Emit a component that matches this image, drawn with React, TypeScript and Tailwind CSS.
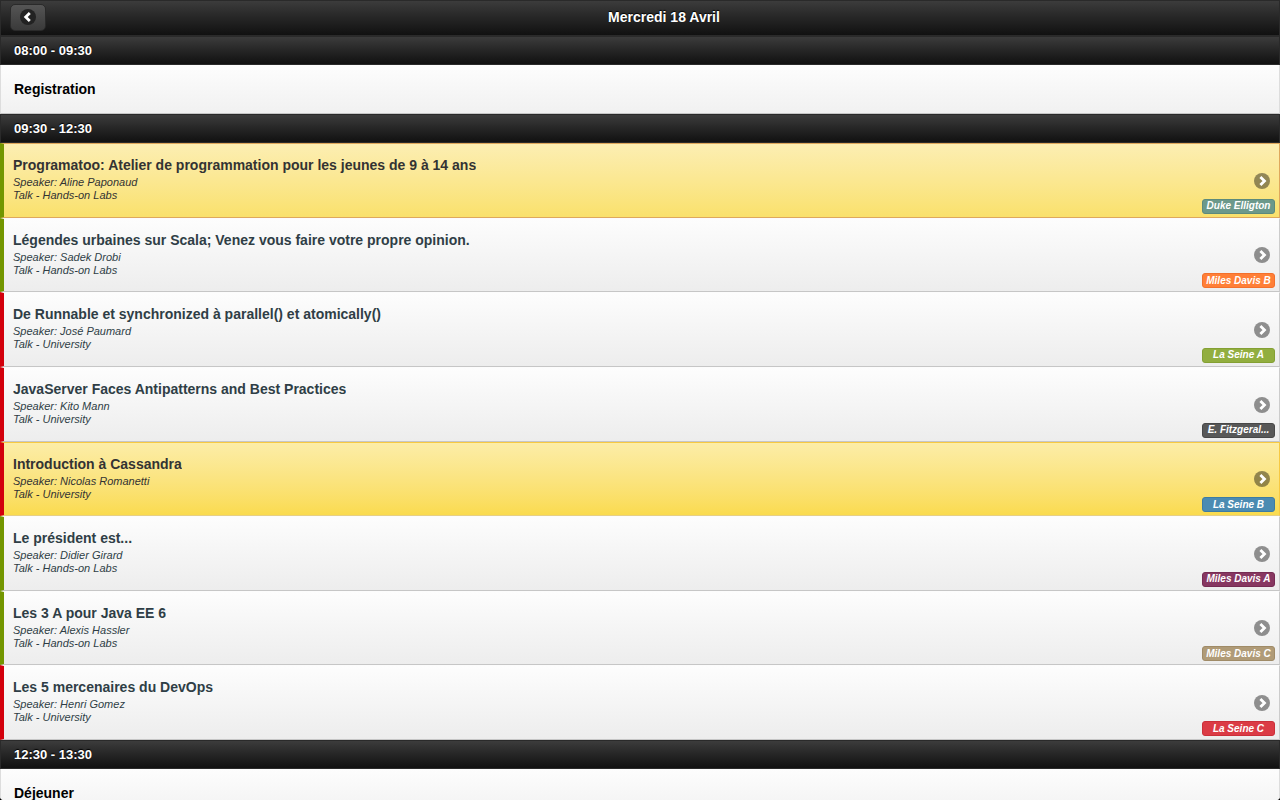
import React from "react";

type Talk = {
  title: string;
  speaker: string;
  kind: string;
  room: string;
  roomClass: string;
  edge: string;
  surface: string;
};

const GREEN = "border-l-[#739600]";
const RED = "border-l-[#d3000c]";
const PLAIN =
  "border-t-[#fcfcfc] border-b-[#c6c6c6] border-r-[#cccccc] bg-linear-to-b from-[#fdfdfd] to-[#ededed] text-[#2f3e46]";
const GOLD =
  "border-t-[#dfa85c] border-b-[#dfa85c] border-r-[#dfa85c] bg-linear-to-b from-[#fceeb2] to-[#fae16b] text-[#333333]";
const GOLD_DEEP =
  "border-t-[#f7c942] border-b-[#e6cf86] border-r-[#f7c942] bg-linear-to-b from-[#fceda7] to-[#fadb4e] text-[#333333]";

const talks: Talk[] = [
  { title: "Programatoo: Atelier de programmation pour les jeunes de 9 à 14 ans", speaker: "Aline Paponaud", kind: "Hands-on Labs", room: "Duke Elligton", roomClass: "border-[#5d8a7c] bg-[#6c998b]", edge: GREEN, surface: GOLD },
  { title: "Légendes urbaines sur Scala; Venez vous faire votre propre opinion.", speaker: "Sadek Drobi", kind: "Hands-on Labs", room: "Miles Davis B", roomClass: "border-[#f3702b] bg-[#ff7f37]", edge: GREEN, surface: PLAIN },
  { title: "De Runnable et synchronized à parallel() et atomically()", speaker: "José Paumard", kind: "University", room: "La Seine A", roomClass: "border-[#84a033] bg-[#92ae3f]", edge: RED, surface: PLAIN },
  { title: "JavaServer Faces Antipatterns and Best Practices", speaker: "Kito Mann", kind: "University", room: "E. Fitzgeral...", roomClass: "border-[#484848] bg-[#585858]", edge: RED, surface: PLAIN },
  { title: "Introduction à Cassandra", speaker: "Nicolas Romanetti", kind: "University", room: "La Seine B", roomClass: "border-[#3d7ca3] bg-[#4b8bb2]", edge: RED, surface: GOLD_DEEP },
  { title: "Le président est...", speaker: "Didier Girard", kind: "Hands-on Labs", room: "Miles Davis A", roomClass: "border-[#762b53] bg-[#873761]", edge: GREEN, surface: PLAIN },
  { title: "Les 3 A pour Java EE 6", speaker: "Alexis Hassler", kind: "Hands-on Labs", room: "Miles Davis C", roomClass: "border-[#a08b67] bg-[#b09b77]", edge: GREEN, surface: PLAIN },
  { title: "Les 5 mercenaires du DevOps", speaker: "Henri Gomez", kind: "University", room: "La Seine C", roomClass: "border-[#cb2f39] bg-[#db3b45]", edge: RED, surface: PLAIN },
];

function Divider({ children }: { children: React.ReactNode }) {
  return (
    <h2 className="flex h-[29px] items-center border border-[#2a2a2a] bg-linear-to-b from-[#3c3c3c] to-[#111111] px-[13px] text-[13px] leading-4 font-bold text-white [text-shadow:0_-1px_1px_#000]">
      {children}
    </h2>
  );
}

function Break({ children }: { children: React.ReactNode }) {
  return (
    <div className="flex h-[49px] items-center border-x border-b border-x-[#dddddd] border-b-[#c6c6c6] bg-linear-to-b from-[#fdfdfd] to-[#f1f1f1] px-[13px] text-[14px] leading-5 font-bold text-black">
      {children}
    </div>
  );
}

function Chevron() {
  return (
    <svg className="size-4" viewBox="0 0 16 16" aria-hidden="true">
      <circle cx="8" cy="8" r="8" fill="#000" fillOpacity="0.42" />
      <path d="M6.4 3.9 10.5 8l-4.1 4.1" fill="none" stroke="#fff" strokeWidth="2.8" />
    </svg>
  );
}

function TalkRow({ talk }: { talk: Talk }) {
  return (
    <li className="grid">
      <a
        href="#talk"
        className={`flex justify-between border-y border-r border-l-4 pr-1 pl-[9px] ${talk.surface} ${talk.edge}`}
      >
        <div className="min-w-0 pt-[10px]">
          <h3 className="truncate text-[14px] leading-[22px] font-bold">{talk.title}</h3>
          <p className="text-[11px] leading-[13px] italic">Speaker: {talk.speaker}</p>
          <p className="text-[11px] leading-[13px] italic">Talk - {talk.kind}</p>
        </div>
        <div className="flex flex-col items-end justify-end gap-[10px] pb-[3px]">
          <span className="pr-[5px]">
            <Chevron />
          </span>
          <span
            className={`flex h-[15px] w-[73px] items-center justify-center rounded-[3px] border text-[10px] leading-3 font-bold whitespace-nowrap text-white italic ${talk.roomClass}`}
          >
            {talk.room}
          </span>
        </div>
      </a>
    </li>
  );
}

export default function App() {
  return (
    <div className="h-screen overflow-hidden bg-black font-['Liberation_Sans',Arial,sans-serif]">
      <div className="h-full overflow-hidden rounded-b-[4px] bg-[#f9f9f9]">
        <header className="grid h-9 grid-cols-[48px_1fr] items-center border border-[#2a2a2a] bg-linear-to-b from-[#3c3c3c] to-[#111111] pb-[2px]">
          <button
            type="button"
            aria-label="Retour"
            className="ml-[9px] flex h-[27px] w-9 items-center justify-center rounded-[5px] border border-[#2a2a2a] bg-linear-to-b from-[#555555] to-[#3a3a3a]"
          >
            <svg className="size-4" viewBox="0 0 16 16" aria-hidden="true">
              <circle cx="8" cy="8" r="8" fill="#222" />
              <path d="M9.8 3.9 5.7 8l4.1 4.1" fill="none" stroke="#fff" strokeWidth="2.8" />
            </svg>
          </button>
          <h1 className="text-center text-[14px] leading-5 font-bold text-white [text-shadow:0_-1px_1px_#000]">
            Mercredi 18 Avril
          </h1>
        </header>
        <main>
          <Divider>08:00 - 09:30</Divider>
          <Break>Registration</Break>
          <Divider>09:30 - 12:30</Divider>
          <ul className="grid min-h-[597px] auto-rows-fr">
            {talks.map((talk) => (
              <TalkRow key={talk.title} talk={talk} />
            ))}
          </ul>
          <Divider>12:30 - 13:30</Divider>
          <Break>Déjeuner</Break>
        </main>
      </div>
    </div>
  );
}
